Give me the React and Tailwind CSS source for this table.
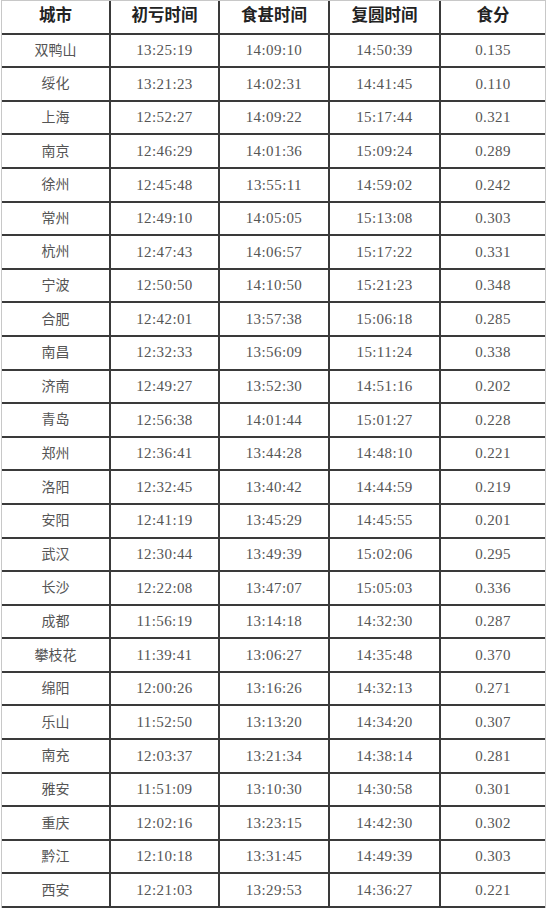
const rows = [
  ["双鸭山", "13:25:19", "14:09:10", "14:50:39", "0.135"],
  ["绥化", "13:21:23", "14:02:31", "14:41:45", "0.110"],
  ["上海", "12:52:27", "14:09:22", "15:17:44", "0.321"],
  ["南京", "12:46:29", "14:01:36", "15:09:24", "0.289"],
  ["徐州", "12:45:48", "13:55:11", "14:59:02", "0.242"],
  ["常州", "12:49:10", "14:05:05", "15:13:08", "0.303"],
  ["杭州", "12:47:43", "14:06:57", "15:17:22", "0.331"],
  ["宁波", "12:50:50", "14:10:50", "15:21:23", "0.348"],
  ["合肥", "12:42:01", "13:57:38", "15:06:18", "0.285"],
  ["南昌", "12:32:33", "13:56:09", "15:11:24", "0.338"],
  ["济南", "12:49:27", "13:52:30", "14:51:16", "0.202"],
  ["青岛", "12:56:38", "14:01:44", "15:01:27", "0.228"],
  ["郑州", "12:36:41", "13:44:28", "14:48:10", "0.221"],
  ["洛阳", "12:32:45", "13:40:42", "14:44:59", "0.219"],
  ["安阳", "12:41:19", "13:45:29", "14:45:55", "0.201"],
  ["武汉", "12:30:44", "13:49:39", "15:02:06", "0.295"],
  ["长沙", "12:22:08", "13:47:07", "15:05:03", "0.336"],
  ["成都", "11:56:19", "13:14:18", "14:32:30", "0.287"],
  ["攀枝花", "11:39:41", "13:06:27", "14:35:48", "0.370"],
  ["绵阳", "12:00:26", "13:16:26", "14:32:13", "0.271"],
  ["乐山", "11:52:50", "13:13:20", "14:34:20", "0.307"],
  ["南充", "12:03:37", "13:21:34", "14:38:14", "0.281"],
  ["雅安", "11:51:09", "13:10:30", "14:30:58", "0.301"],
  ["重庆", "12:02:16", "13:23:15", "14:42:30", "0.302"],
  ["黔江", "12:10:18", "13:31:45", "14:49:39", "0.303"],
  ["西安", "12:21:03", "13:29:53", "14:36:27", "0.221"],
];

const headers = ["城市", "初亏时间", "食甚时间", "复圆时间", "食分"];

const font = {
  fontFamily: '"Liberation Serif", "Noto Sans CJK SC", serif',
};

const Row = ({ cells, head }) => (
  <div className="grid grid-cols-[109px_109px_110px_111px_104px] h-[33.6px] border-b-2 border-[#3a3a3a]">
    {cells.map((c, i) => (
      <div
        key={i}
        className={`flex items-center justify-center ${
          i < 4 ? "border-r-2 border-[#3a3a3a]" : ""
        } ${
          head
            ? "text-[16.5px] font-bold text-[#222]"
            : i === 0
            ? "text-[14px] text-[#555]"
            : "text-[15px] tracking-[0.4px] text-[#555]"
        }`}
      >
        {c}
      </div>
    ))}
  </div>
);

const App = () => {
  return (
    <div className="bg-white w-[550px] h-[910px] overflow-hidden" style={font}>
      <div className="ml-[1px] w-[545px] border-l border-t border-r border-[#c8c8c8]">
        <Row cells={headers} head />
        {rows.map((r) => (
          <Row key={r[0]} cells={r} />
        ))}
      </div>
    </div>
  );
};

export default App;
